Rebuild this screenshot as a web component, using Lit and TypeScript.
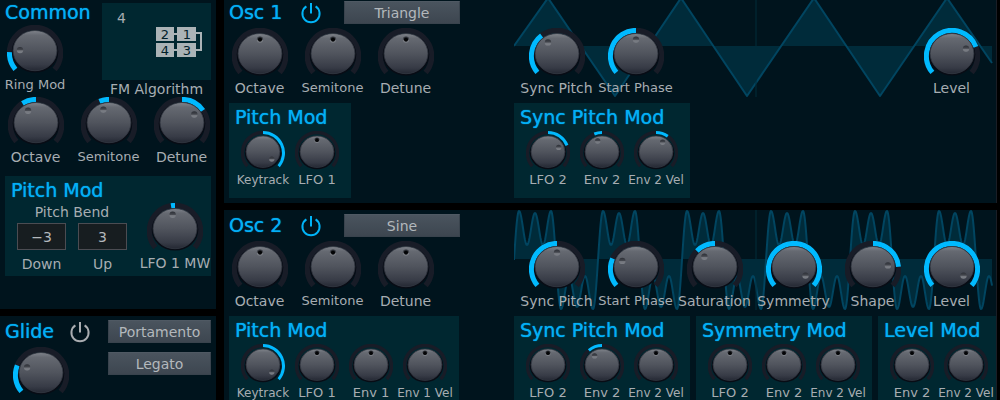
import { LitElement, html, svg, css, nothing } from "lit";
import { customElement, property } from "lit/decorators.js";
import { classMap } from "lit/directives/class-map.js";

const SWEEP = 130;

/** Point on a circle, with the angle measured clockwise from twelve o'clock. */
const polar = (c: number, r: number, deg: number): [number, number] => {
  const a = (deg * Math.PI) / 180;
  return [c + r * Math.sin(a), c - r * Math.cos(a)];
};

const arc = (c: number, r: number, from: number, to: number) => {
  const a = Math.min(from, to);
  const b = Math.max(from, to);
  const [x1, y1] = polar(c, r, a);
  const [x2, y2] = polar(c, r, b);
  return `M${x1.toFixed(2)} ${y1.toFixed(2)}A${r} ${r} 0 ${b - a > 180 ? 1 : 0} 1 ${x2.toFixed(2)} ${y2.toFixed(2)}`;
};

@customElement("synth-knob")
class SynthKnob extends LitElement {
  @property() label = "";
  @property() name = "";
  @property({ type: Number }) angle = 0;
  @property({ type: Number }) origin = 0;
  @property({ type: Boolean }) small = false;
  @property({ type: Boolean }) tight = false;

  static styles = css`
    :host { display: block; min-width: 0; }
    .knob { display: flex; flex-direction: column; align-items: center; }
    .dial { display: grid; }
    .dial > * { grid-area: 1 / 1; }
    .dial input { width: 0; min-width: 100%; height: 100%; margin: 0; opacity: 0; cursor: pointer; }
    .art { display: block; }
    .text { font-size: 14px; line-height: 18px; white-space: nowrap; color: #a7adb2; }
    .text.tight { font-size: 13px; }
    .text.small { font-size: 13px; line-height: 16px; }
    .text.small.tight { font-size: 12px; }
  `;

  render() {
    const s = this.small;
    const c = s ? 22 : 28;
    const w = s ? 3 : 5;
    const r = s ? 20.5 : 25.6;
    const [rx, ry] = s ? [17.3, 16] : [22.3, 20.4];
    const cy = s ? 20.7 : 25.6;
    const a = (this.angle * Math.PI) / 180;
    const dx = c + Math.sin(a) * (s ? 11.5 : 15);
    const dy = cy - Math.cos(a) * (s ? 11.5 : 14);
    const centred = this.angle === 0 && this.origin === 0;
    return html`
      <label class="knob">
        <span class="dial">
          <svg class="art" width=${c * 2} height=${s ? 41 : 51} aria-hidden="true">
            <defs>
              <linearGradient id="body" x1="0" y1="0" x2="0" y2="1">
                <stop offset="0" stop-color="#80848b" />
                <stop offset="0.12" stop-color="#656971" />
                <stop offset="0.5" stop-color="#50545d" />
                <stop offset="0.85" stop-color="#373b46" />
                <stop offset="1" stop-color="#242833" />
              </linearGradient>
              <linearGradient id="dent" x1="0" y1="0" x2="0" y2="1">
                <stop offset="0" stop-color="#2c2f36" />
                <stop offset="0.45" stop-color="#44474e" />
                <stop offset="0.6" stop-color="#73767d" />
                <stop offset="1" stop-color="#7c8087" />
              </linearGradient>
            </defs>
            <path d=${arc(c, r, -SWEEP, SWEEP)} fill="none" stroke="#181c27" stroke-width=${w + 0.4} />
            <ellipse cx=${c} cy=${cy + 1} rx=${rx + 1} ry=${ry + 0.6} fill="#080c15" />
            ${centred ? nothing : svg`<path d=${arc(c, r, this.origin, this.angle)} fill="none" stroke="#00baff" stroke-width=${w} />`}
            <ellipse cx=${c} cy=${cy} rx=${rx - 0.4} ry=${ry - 0.3} fill="url(#body)" stroke="#343842" stroke-width="0.8" />
            <circle cx=${dx} cy=${dy} r=${s ? 2.7 : 3.2} fill="url(#dent)" />
            ${centred ? svg`<circle cx=${dx} cy=${dy} r=${s ? 1.9 : 2.1} fill="#020305" />` : nothing}
          </svg>
          <input
            type="range"
            min=${-SWEEP}
            max=${SWEEP}
            aria-label=${this.name || this.label}
            .value=${String(this.angle)}
          />
        </span>
        ${this.label
          ? html`<span class=${classMap({ text: true, small: s, tight: this.tight })}>${this.label}</span>`
          : nothing}
      </label>
    `;
  }
}

type Knob = { label: string; name?: string; angle?: number; origin?: number; tight?: boolean; last?: boolean };
type Mod = { title: string; knobs: Knob[] };

const TUNING: Knob[] = [{ label: "Octave" }, { label: "Semitone", tight: true }, { label: "Detune" }];
const LOW = -SWEEP;

const OSC1_MODS: Mod[] = [
  { title: "Pitch Mod", knobs: [{ label: "Keytrack", angle: 130, tight: true }, { label: "LFO 1" }] },
  {
    title: "Sync Pitch Mod",
    knobs: [{ label: "LFO 2", angle: 68 }, { label: "Env 2", angle: -22 }, { label: "Env 2 Vel", angle: 35, tight: true }],
  },
];

const OSC2_MODS: Mod[] = [
  {
    title: "Pitch Mod",
    knobs: [
      { label: "Keytrack", angle: 130, tight: true },
      { label: "LFO 1" },
      { label: "Env 1" },
      { label: "Env 1 Vel", tight: true },
    ],
  },
  {
    title: "Sync Pitch Mod",
    knobs: [{ label: "LFO 2" }, { label: "Env 2", angle: -40 }, { label: "Env 2 Vel", tight: true }],
  },
  { title: "Symmetry Mod", knobs: [{ label: "LFO 2" }, { label: "Env 2" }, { label: "Env 2 Vel", tight: true }] },
  { title: "Level Mod", knobs: [{ label: "Env 2" }, { label: "Env 2 Vel", tight: true }] },
];

const OSC1_SHAPE: Knob[] = [
  { label: "Sync Pitch", angle: -37, origin: LOW },
  { label: "Start Phase", angle: 0, origin: LOW, tight: true },
  { label: "Level", angle: 69, origin: LOW, last: true },
];

const OSC2_SHAPE: Knob[] = [
  { label: "Sync Pitch", angle: 0, origin: LOW },
  { label: "Start Phase", angle: -66, origin: LOW, tight: true },
  { label: "Saturation", angle: -45 },
  { label: "Symmetry", angle: 130, origin: LOW },
  { label: "Shape", angle: 85 },
  { label: "Level", angle: 130, origin: LOW },
];

const TRIANGLE = "M0 49 34 1 101 99 167 1 233 99 300 1 366 99 433 1 478 66";

/** Turning points of one folded-sine period, 84 units wide. */
const FOLD: [number, number][] = [
  [5, 1], [13, 35], [21, 3], [29, 35], [37, 1],
  [47, 99], [55, 66], [63, 97], [71, 66], [79, 99],
];

const foldedSine = () => {
  const pts: [number, number][] = [[-5, 99]];
  for (let p = 0; p < 6; p++) for (const [x, y] of FOLD) pts.push([x + p * 84, y]);
  let d = "M0 50";
  let i = 0;
  for (let x = 0.5; x <= 478; x += 0.5) {
    while (pts[i + 1][0] < x) i++;
    const [x0, y0] = pts[i];
    const [x1, y1] = pts[i + 1];
    const t = (1 - Math.cos((Math.PI * (x - x0)) / (x1 - x0))) / 2;
    d += `L${x} ${(y0 + (y1 - y0) * t).toFixed(1)}`;
  }
  return d;
};

@customElement("app-root")
class AppRoot extends LitElement {
  static styles = css`
    :host {
      display: grid;
      grid-template-columns: 216px minmax(0, 1fr);
      gap: 8px;
      height: 100vh;
      padding-right: 3px;
      box-sizing: border-box;
      overflow: hidden;
      background: #000;
      color: #a7adb2;
      font-family: "DejaVu Sans", sans-serif;
      font-size: 14px;
    }
    .column { display: flex; flex-direction: column; gap: 7px; min-width: 0; }
    .oscillators { margin-top: -3px; }
    .panel { background: #00141d; box-sizing: border-box; }
    .title {
      margin: 0;
      font-size: 19px;
      font-weight: 400;
      line-height: 31px;
      color: #03aff5;
      text-shadow: 0 0 1px #03aff5;
      white-space: nowrap;
    }
    .caption { font-size: 14px; line-height: 18px; white-space: nowrap; text-align: center; }

    .choice {
      height: 23px;
      padding: 0;
      border: 1px solid #39434d;
      border-top-color: #4f5963;
      background: linear-gradient(#4a545e, #3d4650);
      color: #b3b8bc;
      font: inherit;
    }
    .power { display: flex; padding: 0; border: 0; background: none; color: #00b4f8; }
    .power.off { color: #a9adb1; }

    .common { height: 309px; padding: 0 5px; }
    .common-top { display: grid; grid-template-columns: 97px 109px; height: 97px; }
    .common-top .title { line-height: 25px; }
    .ring { width: 60px; }
    .algorithm { padding-top: 3px; }
    .algorithm-box { display: flex; gap: 29px; height: 77px; padding: 0 7px 0 15px; background: #002730; box-sizing: border-box; }
    .algorithm-number { padding-top: 6px; line-height: 18px; }
    .algorithm-map { display: block; padding-top: 24px; }
    .common-tuning { display: grid; grid-template-columns: repeat(3, 73px); margin: 0 -7px 10px -6px; }

    .mod { background: #002730; box-sizing: border-box; }
    .mod .title { padding-left: 6px; line-height: 29px; }
    .bend { display: grid; grid-template-columns: 134px 72px; height: 100px; grid-template-rows: 27px 1fr; }
    .bend .title { grid-column: 1 / -1; }
    .bend-fields { display: grid; grid-template-columns: 49px 49px; column-gap: 12px; padding-left: 12px; align-content: start; }
    .bend-name { grid-column: 1 / -1; }
    .field { display: flex; flex-direction: column; gap: 5px; padding-top: 2px; }
    .field input {
      width: 100%;
      height: 27px;
      padding: 0;
      border: 1px solid #4b4c52;
      background: #171d20;
      box-sizing: border-box;
      color: #b3b8bc;
      font: inherit;
      text-align: center;
    }

    .glide { display: grid; grid-template-columns: 103px 103px; flex: 1; padding: 0 5px; }
    .glide-head { display: flex; align-items: center; justify-content: space-between; padding-right: 17px; }
    .glide-knob { width: 72px; }
    .glide-modes { display: flex; flex-direction: column; gap: 9px; padding-top: 4px; }

    .osc {
      display: grid;
      grid-template-columns: 285px minmax(0, 1fr);
      grid-template-rows: 100px 95px;
      row-gap: 6px;
      padding: 0 0 5px 5px;
      border-right: 1px solid #1a1e26;
      overflow: hidden;
      flex: none;
    }
    .osc-head { display: grid; grid-template-columns: 71px 44px 116px; height: 31px; align-items: center; }
    .tuning { display: grid; grid-template-columns: repeat(3, 73px); margin-left: -6px; }
    .shape { display: grid; margin-right: 3px; }
    .shape > * { grid-area: 1 / 1; }
    .wave { display: block; width: 100%; height: 100px; }
    .shape-knobs { display: grid; grid-template-columns: repeat(6, minmax(0, 1fr)); padding: 31px 2px 0 3px; }
    .last { grid-column: 6; }
    .mods { display: flex; gap: 6px; }
    .mods .mod { flex: none; padding-right: 7px; }
    .mod-knobs { display: grid; grid-auto-flow: column; grid-auto-columns: 54px; padding-left: 7px; margin-top: -1px; }
  `;

  private knob(k: Knob, small = false) {
    return html`<synth-knob
      class=${classMap({ last: !!k.last })}
      .label=${k.label}
      .name=${k.name ?? ""}
      .angle=${k.angle ?? 0}
      .origin=${k.origin ?? 0}
      .tight=${!!k.tight}
      .small=${small}
    ></synth-knob>`;
  }

  private power(name: string, on: boolean) {
    return html`<button class=${classMap({ power: true, off: !on })} type="button" aria-label=${name} aria-pressed=${on}>
      <svg width="22" height="22" viewBox="0 0 22 22" fill="none" stroke="currentColor" stroke-width="2">
        <path d="M11 1V11.5" />
        <path d="M6.4 4.4A8.6 8.6 0 1 0 15.6 4.4" />
      </svg>
    </button>`;
  }

  private mod(m: Mod) {
    return html`<section class="mod">
      <h3 class="title">${m.title}</h3>
      <div class="mod-knobs">${m.knobs.map((k) => this.knob(k, true))}</div>
    </section>`;
  }

  private osc(title: string, wave: string, path: string, shape: Knob[], mods: Mod[]) {
    return html`<section class="panel osc">
      <div>
        <div class="osc-head">
          <h2 class="title">${title}</h2>
          ${this.power(title + " on", true)}
          <button class="choice" type="button">${wave}</button>
        </div>
        <div class="tuning">${TUNING.map((k) => this.knob(k))}</div>
      </div>
      <div class="shape">
        <svg class="wave" viewBox="0 0 479 100" preserveAspectRatio="none" aria-hidden="true">
          <path d="${path}V49H0Z" fill="#002b3a" />
          <path d=${path} fill="none" stroke="#014560" stroke-width="2" stroke-linejoin="round" />
          <path d="M242 0V100" stroke="#002b3a" stroke-width="2" stroke-opacity="0.5" />
        </svg>
        <div class="shape-knobs">${shape.map((k) => this.knob(k))}</div>
      </div>
      <div class="mods">${this.mod(mods[0])}</div>
      <div class="mods">${mods.slice(1).map((m) => this.mod(m))}</div>
    </section>`;
  }

  render() {
    return html`
      <div class="column">
        <section class="panel common">
          <div class="common-top">
            <div>
              <h2 class="title">Common</h2>
              <div class="ring">${this.knob({ label: "Ring Mod", angle: -88, origin: LOW, tight: true })}</div>
            </div>
            <div class="algorithm">
              <div class="algorithm-box">
                <span class="algorithm-number">4</span>
                <svg class="algorithm-map" width="48" height="30" viewBox="0 0 48 30" font-size="13" text-anchor="middle">
                  <path d="M18 7H24M18 23H24M40 6H46V23H40" fill="none" stroke="#abb3b6" stroke-width="2" />
                  <path d="M1 0H19V14H1ZM22 0H41V14H22ZM1 16H19V30H1ZM22 16H41V30H22Z" fill="#abb3b6" />
                  <g fill="#00202a">
                    <text x="10" y="12">2</text>
                    <text x="32" y="12">1</text>
                    <text x="10" y="28">4</text>
                    <text x="32" y="28">3</text>
                  </g>
                </svg>
              </div>
              <div class="caption">FM Algorithm</div>
            </div>
          </div>
          <div class="common-tuning">
            ${this.knob({ label: "Octave", angle: -32 })}
            ${this.knob({ label: "Semitone", angle: -22, tight: true })}
            ${this.knob({ label: "Detune", angle: 55 })}
          </div>
          <section class="mod bend">
            <h3 class="title">Pitch Mod</h3>
            <div class="bend-fields">
              <span class="caption bend-name">Pitch Bend</span>
              <label class="field"><input type="text" value="−3" /><span class="caption">Down</span></label>
              <label class="field"><input type="text" value="3" /><span class="caption">Up</span></label>
            </div>
            ${this.knob({ label: "LFO 1 MW", angle: -9 })}
          </section>
        </section>
        <section class="panel glide">
          <div>
            <div class="glide-head">
              <h2 class="title">Glide</h2>
              ${this.power("Glide on", false)}
            </div>
            <div class="glide-knob">${this.knob({ label: "", name: "Glide time", angle: -68, origin: LOW })}</div>
          </div>
          <div class="glide-modes">
            <button class="choice" type="button">Portamento</button>
            <button class="choice" type="button">Legato</button>
          </div>
        </section>
      </div>
      <div class="column oscillators">
        ${this.osc("Osc 1", "Triangle", TRIANGLE, OSC1_SHAPE, OSC1_MODS)}
        ${this.osc("Osc 2", "Sine", foldedSine(), OSC2_SHAPE, OSC2_MODS)}
      </div>
    `;
  }
}
